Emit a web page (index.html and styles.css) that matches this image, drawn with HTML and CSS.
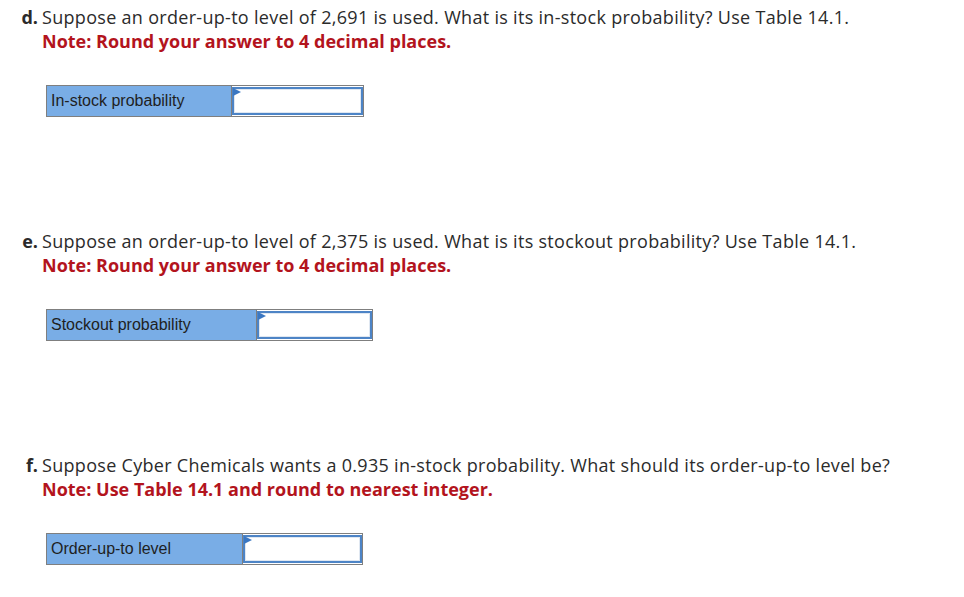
FILE: index.html
```html
<!DOCTYPE html>
<html lang="en">
<head>
<meta charset="utf-8">
<title>Inventory questions</title>
<link rel="stylesheet" href="styles.css">
</head>
<body>
<div class="page">
  <section class="q">
    <div class="q-head">
      <span class="q-tag">d.</span>
      <div class="q-body">
        <p class="q-text">Suppose an order-up-to level of 2,691 is used. What is its in-stock probability? Use Table 14.1.</p>
        <p class="q-note">Note: Round your answer to 4 decimal places.</p>
      </div>
    </div>
    <div class="answer">
      <div class="a-label w-d">In-stock probability</div>
      <div class="a-input w-di"><span class="tri"></span></div>
    </div>
  </section>

  <section class="q">
    <div class="q-head">
      <span class="q-tag">e.</span>
      <div class="q-body">
        <p class="q-text">Suppose an order-up-to level of 2,375 is used. What is its stockout probability? Use Table 14.1.</p>
        <p class="q-note">Note: Round your answer to 4 decimal places.</p>
      </div>
    </div>
    <div class="answer">
      <div class="a-label w-e">Stockout probability</div>
      <div class="a-input w-ei"><span class="tri"></span></div>
    </div>
  </section>

  <section class="q">
    <div class="q-head">
      <span class="q-tag">f.</span>
      <div class="q-body">
        <p class="q-text">Suppose Cyber Chemicals wants a 0.935 in-stock probability. What should its order-up-to level be?</p>
        <p class="q-note">Note: Use Table 14.1 and round to nearest integer.</p>
      </div>
    </div>
    <div class="answer">
      <div class="a-label w-f">Order-up-to level</div>
      <div class="a-input w-fi"><span class="tri"></span></div>
    </div>
  </section>
</div>
</body>
</html>
```

FILE: styles.css
```css
html, body {
  margin: 0;
  padding: 0;
  background: #ffffff;
}

.page {
  padding: 5px 0 0 0;
  font-family: "Open Sans", Lato, sans-serif;
  color: #2b2b2b;
}

.q {
  margin-bottom: 112px;
}

.q:last-child {
  margin-bottom: 0;
}

.q-head {
  display: flex;
  font-size: 18px;
  line-height: 24px;
  letter-spacing: 0.3px;
}

.q-tag {
  width: 28px;
  margin-left: 10px;
  padding-right: 4px;
  text-align: right;
  font-weight: 700;
  letter-spacing: 0;
  flex: none;
}

.q-body {
  flex: 1;
}

.q-text,
.q-note {
  margin: 0;
}

.q-note {
  color: #b3141d;
  font-weight: 700;
  letter-spacing: 0;
}

.answer {
  display: flex;
  margin: 32px 0 0 46px;
  width: max-content;
  border: 1px solid #7f7f7f;
  height: 30px;
}

.a-label {
  background: #79ade6;
  border-right: 1px solid #7f7f7f;
  font-family: "Liberation Sans", Arial, sans-serif;
  font-size: 16px;
  line-height: 29px;
  color: #1f1f1f;
  padding-left: 4px;
  box-sizing: border-box;
}

.w-d { width: 185px; }
.w-e { width: 210px; }
.w-f { width: 196px; }

.a-input {
  position: relative;
  margin: 1px 0 1px 0;
  border: 2px solid #4d84c6;
  box-shadow: inset 0 0 0 1px #dfe7f1;
  background: #ffffff;
  box-sizing: border-box;
}

.w-di { width: 131px; }
.w-ei { width: 115px; }
.w-fi { width: 119px; }

.tri {
  position: absolute;
  left: -1px;
  top: -1px;
  width: 0;
  height: 0;
  border-left: 8px solid #3b77c2;
  border-top: 4px solid transparent;
  border-bottom: 4px solid transparent;
}
```
